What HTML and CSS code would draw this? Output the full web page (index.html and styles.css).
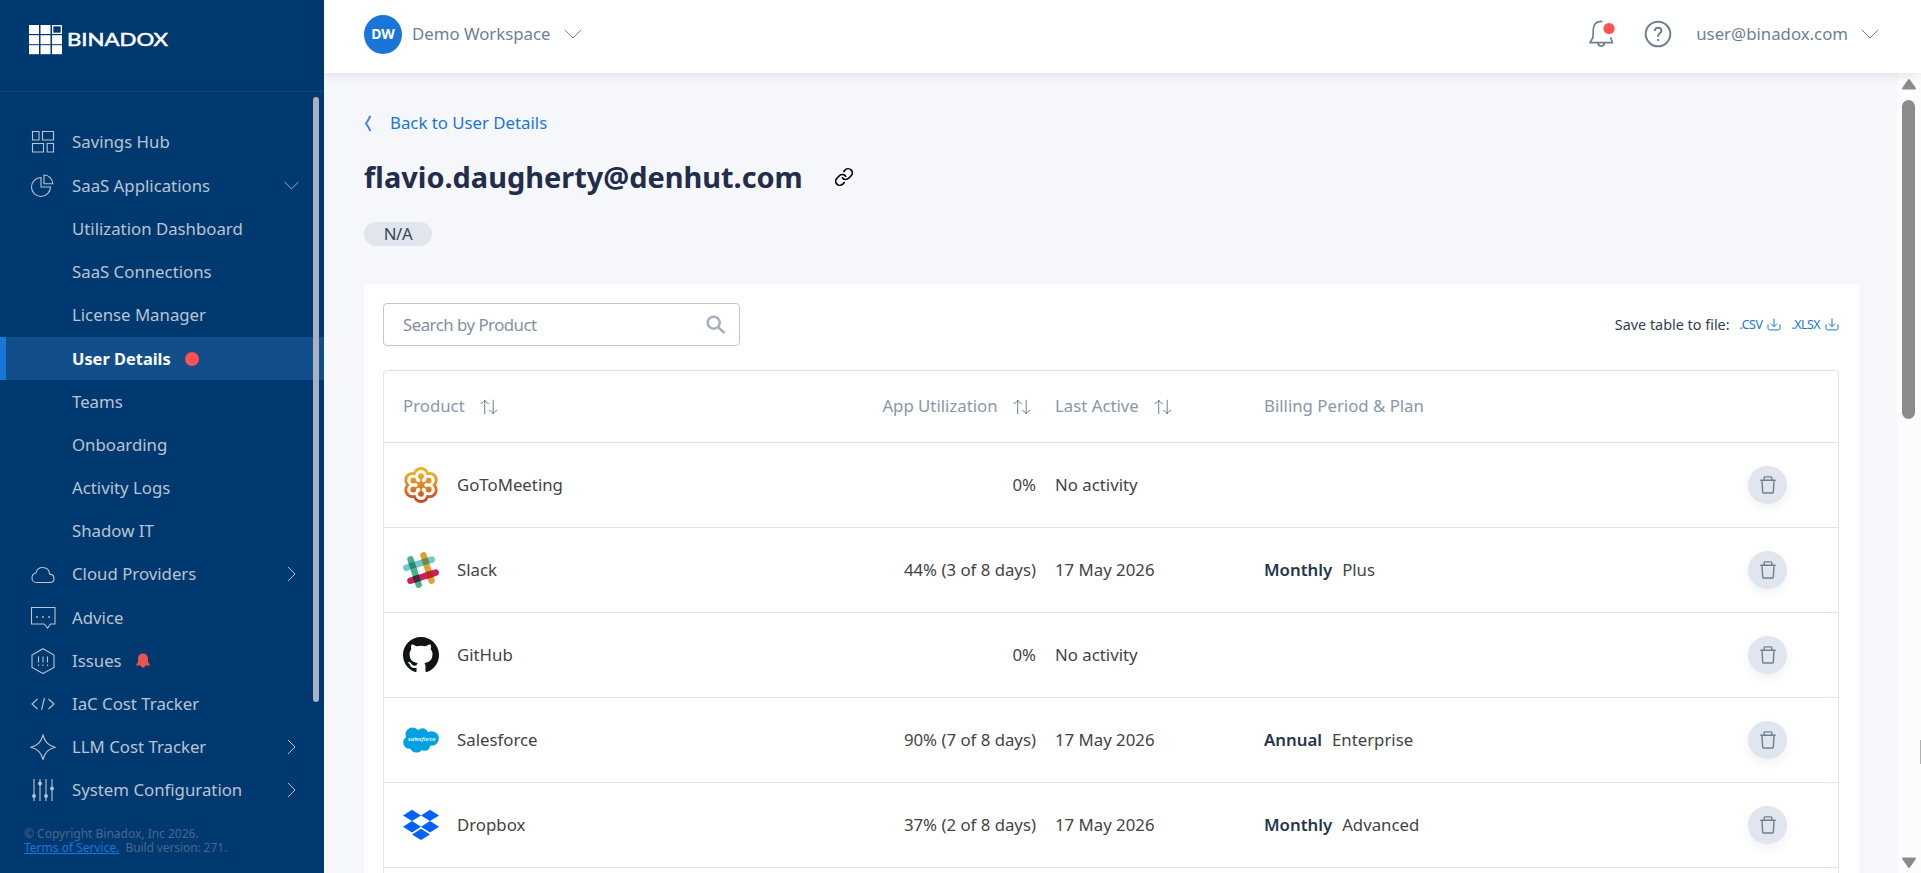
FILE: index.html
```html
<!DOCTYPE html>
<html lang="en">
  <head>
    <meta charset="UTF-8" />
    <meta name="viewport" content="width=device-width, initial-scale=1.0" />
    <title>User Details</title>
    <link rel="stylesheet" href="styles.css">
  </head>
  <body>
    <svg class="sprite" width="0" height="0">
      <symbol id="chevron-down" viewBox="0 0 18 10"><path d="M.7.8 9 9 17.3.8" /></symbol>
      <symbol id="chevron-right" viewBox="0 0 9 16"><path d="M1 1l7 7-7 7" /></symbol>
      <symbol id="sort" viewBox="0 0 18 16">
        <path d="M4.7 15.2V1M.6 4.5C2.700 4 4.200 2.700 4.700 1c.5 1.700 2 3 4.100 3.500M13.200.800V15M9.100 11.500c2.100.5 3.600 1.800 4.100 3.500.5-1.700 2-3 4.100-3.500" />
      </symbol>
      <symbol id="download" viewBox="0 0 14 13">
        <path d="M1 6.500v3.700c0 1 .7 1.700 1.700 1.700h8.600c1 0 1.700-.7 1.700-1.700V6.500M7 .5v8M4 5.700l3 3 3-3" />
      </symbol>
      <symbol id="trash" viewBox="0 0 16 18">
        <path d="M.3 4.200h15.400M2 4.200l.7 12.100c0 .4.300.700.700.700h9.200c.4 0 .7-.3.7-.7L14 4.200M4.200 4V1.700c0-.5.300-.8.800-.8h6c.5 0 .8.300.8.800V4" />
      </symbol>
    </svg>

    <aside class="sidebar">
      <div class="logo">
        <svg width="145" height="30" viewBox="0 0 145 30">
          <g fill="#fff">
            <rect x="0" y="0" width="10" height="9" /><rect x="11.500" y="0" width="10" height="9" />
            <rect x="0" y="10.200" width="10" height="9" /><rect x="11.500" y="10.200" width="10" height="9" /><rect x="23" y="10.200" width="10" height="9" />
            <rect x="0" y="20.200" width="10" height="9" /><rect x="11.500" y="20.200" width="10" height="9" /><rect x="23" y="20.200" width="10" height="9" />
          </g>
          <rect x="23.700" y=".7" width="8.600" height="7.600" fill="none" stroke="#fff" stroke-width="1.300" />
          <text class="logo-text" x="38" y="21" textLength="101" lengthAdjust="spacingAndGlyphs">BINADOX</text>
        </svg>
      </div>

      <nav class="nav">
        <a class="nav-item">
          <svg class="nav-icon" viewBox="0 0 26 26"><path d="M2.500 2.500h6.500v8.500H2.500zM12.500 2.500h11v8.500h-11zM2.500 14.500h11v8.500h-11zM17.200 14.500h6.300v8.500h-6.300z" /></svg>
          Savings Hub
        </a>
        <a class="nav-item">
          <svg class="nav-icon" viewBox="0 0 26 26"><path d="M11 4.500a9.500 9.500 0 1 0 9.500 9.500H11zM14 2v8.700h8.700A8.700 8.700 0 0 0 14 2z" /></svg>
          SaaS Applications
          <svg class="arrow-down" width="15" height="9"><use href="#chevron-down" /></svg>
        </a>
        <a class="nav-item">Utilization Dashboard</a>
        <a class="nav-item">SaaS Connections</a>
        <a class="nav-item">License Manager</a>
        <a class="nav-item active">User Details <span class="dot"></span></a>
        <a class="nav-item">Teams</a>
        <a class="nav-item">Onboarding</a>
        <a class="nav-item">Activity Logs</a>
        <a class="nav-item">Shadow IT</a>
        <a class="nav-item">
          <svg class="nav-icon" viewBox="0 0 26 26"><path d="M6.500 21.500h13.200c2.500 0 4.300-1.800 4.300-4.100 0-2.400-1.800-4.200-4.300-4.300-.5-4-3.200-6.600-7-6.600-3.500 0-6 2.200-6.700 5.500C3.500 12.500 2 14.500 2 17c0 2.500 2 4.500 4.500 4.500z" /></svg>
          Cloud Providers
          <svg class="arrow-right" width="9" height="16"><use href="#chevron-right" /></svg>
        </a>
        <a class="nav-item">
          <svg class="nav-icon" viewBox="0 0 26 26"><path d="M1.500 2.500h23.500v16.500h-4.500l-2.800 4-3.500-4H1.500z" /><path class="dots" d="M7 12h.01M13 12h.01M19 12h.01" /></svg>
          Advice
        </a>
        <a class="nav-item">
          <svg class="nav-icon" viewBox="0 0 26 26"><path d="M13 .7 24 7v12.500L13 25.500 2 19.500V7zM8.500 8.500v6M13 8.500v6M17.500 8.500v6M8.500 16.500V18M13 16.500V18M17.500 16.500V18" /></svg>
          Issues
          <svg class="bell-badge" width="14" height="15" viewBox="0 0 14 15"><path d="M7 .5C3.900.5 2 2.700 2 5.600v3.200L.3 11.400c-.3.500 0 1.100.5 1.100h3.900C5 14 5.900 14.600 7 14.600s2-.6 2.300-2.100h3.900c.5 0 .8-.6.5-1.100L12 8.800V5.600C12 2.700 10.100.5 7 .5z" /></svg>
        </a>
        <a class="nav-item">
          <svg class="nav-icon" viewBox="0 0 26 26"><path d="M7.500 8 2 13l5.500 5M18.500 8l5.500 5-5.500 5M14.500 7l-3 12" /></svg>
          IaC Cost Tracker
        </a>
        <a class="nav-item">
          <svg class="nav-icon" viewBox="0 0 26 26"><path d="M13 1c2 7 4.500 10 12 12.300C17.500 15.500 15 18.500 13 25.500c-2-7-4.500-10-12-12.200C8.500 11 11 8 13 1z" /></svg>
          LLM Cost Tracker
          <svg class="arrow-right" width="9" height="16"><use href="#chevron-right" /></svg>
        </a>
        <a class="nav-item">
          <svg class="nav-icon" viewBox="0 0 26 26"><path d="M4 2v22M10 2v22M16 2v22M22 2v22" /><g class="knobs"><circle cx="4" cy="19" r="1.900" /><circle cx="10" cy="6.500" r="1.900" /><circle cx="16" cy="19" r="1.900" /><circle cx="22" cy="11.500" r="1.900" /></g></svg>
          System Configuration
          <svg class="arrow-right" width="9" height="16"><use href="#chevron-right" /></svg>
        </a>
      </nav>

      <div class="copyright">
        <p>© Copyright Binadox, Inc 2026.</p>
        <p><a class="terms">Terms of Service.</a> <span class="build">Build version: 271.</span></p>
      </div>
      <div class="nav-scroll"></div>
    </aside>

    <div class="main">
      <header class="header">
        <div class="workspace">
          <span class="avatar">DW</span>
          <span class="workspace-name">Demo Workspace</span>
          <svg width="18" height="10"><use href="#chevron-down" /></svg>
        </div>
        <div class="account">
          <svg class="bell" width="26" height="28" viewBox="0 0 26 28">
            <path d="M13.500 1.300h-.8C7.500 1.300 4.400 4.400 4.300 9.200l-.3 8L1.200 22.600h22.100l-1.700-5.400" />
            <path d="M9 22.800c.2 1.900 1.400 3.200 3.200 3.200s3-1.300 3.200-3.200" />
            <circle cx="20" cy="8.500" r="5.600" />
          </svg>
          <svg class="help" width="28" height="28" viewBox="0 0 28 28">
            <circle cx="14" cy="14" r="12.300" />
            <path d="M10.800 11c0-2 1.300-3.300 3.300-3.300s3.300 1.200 3.300 3c0 2.600-3.300 2.700-3.300 5.500v.5M14.100 19v2" />
          </svg>
          <span class="email">user@binadox.com</span>
          <svg width="18" height="10"><use href="#chevron-down" /></svg>
        </div>
      </header>

      <div class="body">
        <main class="content">
          <a class="back">
            <svg width="8" height="17" viewBox="0 0 8 17"><path d="M6.300.8C5 4 3.500 6.500 2 8.500c1.500 2 3 4.300 4.300 7.500" /></svg>
            Back to User Details
          </a>
          <div class="title-row">
            <h1>flavio.daugherty@denhut.com</h1>
            <svg width="20" height="20" viewBox="0 0 24 24"><path d="M10 13a5 5 0 0 0 7.540.54l3-3a5 5 0 0 0-7.070-7.070l-1.720 1.710M14 11a5 5 0 0 0-7.540-.54l-3 3a5 5 0 0 0 7.070 7.070l1.710-1.710" /></svg>
          </div>
          <span class="pill">N/A</span>

          <section class="card">
            <div class="toolbar">
              <div class="search">
                <span>Search by Product</span>
                <svg width="20" height="20" viewBox="0 0 20 20"><circle cx="7.700" cy="7.700" r="6" /><path d="M12 12l6.500 6" /></svg>
              </div>
              <div class="save">
                <span class="save-label">Save table to file:</span>
                <a>.CSV <svg width="14" height="13"><use href="#download" /></svg></a>
                <a>.XLSX <svg width="14" height="13"><use href="#download" /></svg></a>
              </div>
            </div>

            <div class="table-box">
              <table>
                <colgroup>
                  <col class="col-product"><col class="col-util"><col class="col-active"><col class="col-plan"><col class="col-action">
                </colgroup>
                <thead>
                  <tr>
                    <th>Product <svg width="18" height="16"><use href="#sort" /></svg></th>
                    <th class="util">App Utilization <svg width="18" height="16"><use href="#sort" /></svg></th>
                    <th>Last Active <svg width="18" height="16"><use href="#sort" /></svg></th>
                    <th>Billing Period &amp; Plan</th>
                    <th></th>
                  </tr>
                </thead>
                <tbody>
                  <tr>
                    <td>
                      <div class="product">
                        <svg width="36" height="36" viewBox="0 0 36 36">
                          <defs><linearGradient id="goto" gradientUnits="userSpaceOnUse" x1="0" y1="0" x2="0" y2="36"><stop offset=".1" stop-color="#ebb626" /><stop offset=".5" stop-color="#e08525" /><stop offset=".9" stop-color="#cf4a27" /></linearGradient></defs>
                          <g fill="url(#goto)"><circle cx="18" cy="18" r="14" /><circle cx="18" cy="8" r="8" /><circle cx="18" cy="28" r="8" /><circle cx="9.300" cy="13" r="8" /><circle cx="26.700" cy="13" r="8" /><circle cx="9.300" cy="23" r="8" /><circle cx="26.700" cy="23" r="8" /></g>
                          <g fill="#fff"><circle cx="18" cy="18" r="11.500" /><circle cx="18" cy="8.500" r="5.500" /><circle cx="18" cy="27.500" r="5.500" /><circle cx="9.700" cy="13.200" r="5.500" /><circle cx="26.300" cy="13.200" r="5.500" /><circle cx="9.700" cy="22.800" r="5.500" /><circle cx="26.300" cy="22.800" r="5.500" /></g>
                          <path fill="none" stroke="#e08525" stroke-width="1.700" d="M18 9.500v17.500M10.500 13.500l15 9M25.500 13.500l-15 9" />
                          <g fill="url(#goto)"><circle cx="18" cy="18" r="3.400" /><circle cx="18" cy="9.200" r="2.900" /><circle cx="18" cy="26.800" r="2.900" /><circle cx="10.300" cy="13.500" r="2.900" /><circle cx="25.700" cy="13.500" r="2.900" /><circle cx="10.300" cy="22.500" r="2.900" /><circle cx="25.700" cy="22.500" r="2.900" /></g>
                        </svg>
                        GoToMeeting
                      </div>
                    </td>
                    <td class="util">0%</td>
                    <td>No activity</td>
                    <td></td>
                    <td><button class="delete"><svg width="16" height="18"><use href="#trash" /></svg></button></td>
                  </tr>
                  <tr>
                    <td>
                      <div class="product">
                        <svg width="36" height="36" viewBox="0 0 36 36" fill="none" stroke-width="6.400" stroke-linecap="round">
                          <path stroke="#e3a12c" d="M20.500 3.200l8 25.400" />
                          <path stroke="#40b48a" d="M7.500 7.300l8.200 25.400" />
                          <path stroke="#70c7cc" d="M3.300 15.800l25.400-8.200" />
                          <path stroke="#d01c59" d="M7.400 28.800l25.300-8.200" />
                          <g stroke-linecap="butt">
                            <path stroke="#258a75" d="M8.500 10.400l2 6.200" />
                            <path stroke="#6c8a42" d="M21.500 6.400l2 6.200" />
                            <path stroke="#3d2a3c" d="M12.600 23.500l2 6.400" />
                            <path stroke="#bb242a" d="M25.600 19.400l2 6.400" />
                          </g>
                        </svg>
                        Slack
                      </div>
                    </td>
                    <td class="util">44% (3 of 8 days)</td>
                    <td>17 May 2026</td>
                    <td><b>Monthly</b>Plus</td>
                    <td><button class="delete"><svg width="16" height="18"><use href="#trash" /></svg></button></td>
                  </tr>
                  <tr>
                    <td>
                      <div class="product">
                        <svg width="36" height="36" viewBox="0 0 16 16"><path fill="#101514" d="M8 0C3.580 0 0 3.580 0 8c0 3.540 2.290 6.530 5.470 7.590.4.070.55-.17.55-.38 0-.19-.01-.82-.01-1.490-2.010.37-2.530-.49-2.690-.94-.09-.23-.48-.94-.82-1.130-.28-.15-.68-.52-.01-.53.63-.01 1.080.58 1.230.82.72 1.210 1.870.87 2.330.66.07-.52.28-.87.51-1.070-1.780-.2-3.640-.89-3.640-3.950 0-.87.31-1.590.82-2.150-.08-.2-.36-1.020.08-2.120 0 0 .67-.21 2.200.82.64-.18 1.320-.27 2-.27s1.360.09 2 .27c1.530-1.040 2.200-.82 2.200-.82.44 1.100.16 1.920.08 2.120.51.56.82 1.270.82 2.150 0 3.070-1.870 3.750-3.650 3.950.29.25.54.73.54 1.480 0 1.070-.01 1.930-.01 2.200 0 .21.15.46.55.38A8.010 8.010 0 0 0 16 8c0-4.420-3.580-8-8-8z" /></svg>
                        GitHub
                      </div>
                    </td>
                    <td class="util">0%</td>
                    <td>No activity</td>
                    <td></td>
                    <td><button class="delete"><svg width="16" height="18"><use href="#trash" /></svg></button></td>
                  </tr>
                  <tr>
                    <td>
                      <div class="product">
                        <svg width="36" height="36" viewBox="0 0 36 36">
                          <g fill="#00a1e0"><circle cx="9.500" cy="12.500" r="7" /><circle cx="19.500" cy="12" r="5.700" /><circle cx="28.500" cy="16.500" r="7.300" /><circle cx="6.500" cy="20.500" r="6.300" /><circle cx="13.500" cy="24" r="6.600" /><circle cx="21.800" cy="23.500" r="5.200" /><path d="M7 12h22v11H7z" /></g>
                          <text class="sf-text" x="5" y="19" textLength="27.500" lengthAdjust="spacingAndGlyphs">salesforce</text>
                        </svg>
                        Salesforce
                      </div>
                    </td>
                    <td class="util">90% (7 of 8 days)</td>
                    <td>17 May 2026</td>
                    <td><b>Annual</b>Enterprise</td>
                    <td><button class="delete"><svg width="16" height="18"><use href="#trash" /></svg></button></td>
                  </tr>
                  <tr>
                    <td>
                      <div class="product">
                        <svg width="36" height="36" viewBox="0 0 36 36"><path fill="#0061ff" d="M9 2.700l9 5.700-9 5.700-9-5.700zM27 2.700l9 5.700-9 5.700-9-5.700zM9 14.100l9 5.700-9 5.700-9-5.700zM27 14.100l9 5.700-9 5.700-9-5.700zM18 21.700l9 5.700-9 5.700-9-5.700z" /></svg>
                        Dropbox
                      </div>
                    </td>
                    <td class="util">37% (2 of 8 days)</td>
                    <td>17 May 2026</td>
                    <td><b>Monthly</b>Advanced</td>
                    <td><button class="delete"><svg width="16" height="18"><use href="#trash" /></svg></button></td>
                  </tr>
                </tbody>
              </table>
            </div>
          </section>
        </main>

        <div class="scrollbar">
          <svg width="16" height="12" viewBox="0 0 16 12"><path d="M8 2l6 8.500H2z" /></svg>
          <div class="thumb"></div>
          <svg class="scroll-down" width="16" height="12" viewBox="0 0 16 12"><path d="M8 10L2 1.500h12z" /></svg>
        </div>
      </div>
    </div>
    <div class="side-tab"></div>
  </body>
</html>
```
FILE: styles.css
```css
* {
  margin: 0;
  padding: 0;
  box-sizing: border-box;
}

body {
  display: flex;
  height: 100vh;
  overflow: hidden;
  font-family: "Noto Sans", sans-serif;
  font-size: 16.8px;
  line-height: 24px;
  color: #444;
  background: #f5f7fb;
}

.sprite {
  position: absolute;
}

svg {
  flex-shrink: 0;
}

/* sidebar */
.sidebar {
  position: relative;
  display: flex;
  flex-direction: column;
  flex-shrink: 0;
  width: 324px;
  background: #00396f;
}

.logo {
  height: 92px;
  padding: 25px 0 0 29px;
  border-bottom: 1px solid #114880;
}

.logo-text {
  font-family: Lato, sans-serif;
  font-size: 18px;
  font-weight: 400;
  fill: #fff;
  stroke: #fff;
  stroke-width: 0.5;
}

.nav {
  padding-top: 29px;
}

.nav-item {
  display: flex;
  align-items: center;
  height: 43.2px;
  padding: 0 24px 0 72px;
  color: #b9c4d3;
}

.nav-item:first-child {
  padding-bottom: 2px;
}

.nav-icon {
  width: 26px;
  height: 26px;
  margin: 0 16px 0 -42px;
  fill: none;
  stroke: #b9c4d3;
  stroke-width: 1.100;
}

.nav-icon .dots {
  stroke-width: 1.800;
  stroke-linecap: round;
}

.nav-icon .knobs {
  fill: #b9c4d3;
  stroke: none;
}

.nav-item.active {
  padding-left: 66px;
  border-left: 6px solid #1976d8;
  background: #114e8a;
  color: #fff;
  font-size: 16.4px;
  font-weight: 700;
}

.dot {
  width: 14px;
  height: 14px;
  margin: 1px 0 0 14px;
  border-radius: 50%;
  background: #ff5252;
}

.bell-badge {
  margin-left: 14px;
  fill: #e8554e;
}

.arrow-down,
.arrow-right {
  margin-left: auto;
  fill: none;
  stroke: #b9c4d3;
}

.arrow-down {
  margin-right: 1px;
}

.arrow-right {
  margin-right: 4px;
}

.copyright {
  padding: 15px 0 0 24px;
  font-size: 12px;
  line-height: 14px;
  color: #4d6590;
}

.terms {
  color: #1976d8;
  text-decoration: underline;
}

.build {
  margin-left: 3px;
  letter-spacing: -0.1px;
}

.nav-scroll {
  position: absolute;
  top: 97px;
  right: 5px;
  width: 6px;
  height: 605px;
  border-radius: 3px;
  background: #a9b1c0;
}

/* header */
.main {
  display: flex;
  flex-direction: column;
  flex: 1;
  min-width: 0;
}

.header {
  position: relative;
  display: flex;
  align-items: center;
  justify-content: space-between;
  flex-shrink: 0;
  height: 73px;
  padding: 0 42px 5px 40px;
  background: #fff;
  box-shadow: 0 2px 10px rgba(40, 50, 80, 0.12);
  color: #708090;
}

.workspace,
.account {
  display: flex;
  align-items: center;
}

.header svg {
  fill: none;
  stroke: #708090;
}

.avatar {
  width: 38px;
  height: 39px;
  margin-right: 10px;
  border-radius: 50%;
  background: #1976d8;
  color: #fff;
  font-size: 14px;
  font-weight: 700;
  line-height: 38px;
  text-align: center;
}

.workspace-name,
.email {
  margin-right: 13px;
}

.header .bell {
  margin-right: 29px;
  stroke-width: 1.700;
}

.bell circle {
  fill: #ff5252;
  stroke: none;
}

.header .help {
  margin-right: 24px;
  stroke-width: 2;
}

/* page body */
.body {
  display: flex;
  flex: 1;
  min-height: 0;
}

.content {
  flex: 1;
  padding: 38px 38px 0 40px;
  overflow: hidden;
}

.back {
  display: flex;
  align-items: center;
  gap: 18px;
  color: #1976d8;
}

.back svg {
  fill: none;
  stroke: #4285f4;
  stroke-width: 2;
}

.title-row {
  display: flex;
  align-items: center;
  gap: 31px;
  margin-top: 21px;
}

h1 {
  font-size: 28.9px;
  line-height: 42px;
  color: #222d4b;
}

.title-row svg {
  fill: none;
  stroke: #000;
  stroke-width: 2;
  stroke-linecap: round;
}

.pill {
  display: block;
  width: 68px;
  height: 24px;
  margin-top: 24px;
  border-radius: 12px;
  background: #e0e5ee;
  color: #36474f;
  letter-spacing: -0.4px;
  text-align: center;
}

.card {
  height: 700px;
  margin-top: 38px;
  padding: 19px 20px 0 19px;
  border-radius: 4px;
  background: #fff;
}

.toolbar {
  display: flex;
  align-items: center;
  justify-content: space-between;
}

.search {
  display: flex;
  align-items: center;
  justify-content: space-between;
  width: 357px;
  height: 43px;
  padding: 0 13px 0 19px;
  border: 1px solid #c1c5d3;
  border-radius: 4px;
  letter-spacing: -0.5px;
  color: #8490a0;
}

.search svg {
  fill: none;
  stroke: #a5b0c0;
  stroke-width: 2.500;
}

.save {
  display: flex;
  align-items: center;
  gap: 10px;
  font-size: 14.4px;
  color: #2f3e50;
}

.save a {
  display: flex;
  align-items: center;
  gap: 5px;
  font-size: 12.4px;
  letter-spacing: -0.5px;
  color: #1976d8;
}

.save svg {
  fill: none;
  stroke: #1976d8;
}

.table-box {
  height: 600px;
  margin-top: 24px;
  border: 1px solid #e0e4ee;
  border-radius: 4px;
}

table {
  width: 100%;
  table-layout: fixed;
  border-collapse: collapse;
}

.col-product {
  width: 478px;
}

.col-util {
  width: 183px;
}

.col-active {
  width: 209px;
}

.col-plan {
  width: 440px;
}

tr {
  border-bottom: 1px solid #e0e4ec;
}

th,
td {
  height: 85px;
  padding: 0 10px;
  text-align: left;
  white-space: nowrap;
}

th {
  height: 71px;
  font-weight: 400;
  color: #8a97a8;
}

th svg {
  margin-left: 11px;
  vertical-align: -3px;
  fill: none;
  stroke: #708090;
}

th:first-child,
td:first-child {
  padding-left: 19px;
}

.util {
  padding-right: 9px;
  text-align: right;
}

th.util {
  padding-right: 14px;
}

.product {
  display: flex;
  align-items: center;
  gap: 18px;
}

.sf-text {
  font-family: "Open Sans", sans-serif;
  font-size: 6px;
  font-style: italic;
  font-weight: 600;
  fill: #fff;
}

td b {
  margin-right: 10px;
  font-weight: 600;
  color: #26364a;
}

.delete {
  display: flex;
  align-items: center;
  justify-content: center;
  width: 39px;
  height: 38px;
  margin-left: 44px;
  border: none;
  border-radius: 50%;
  background: #e0e5ee;
  box-shadow: 0 4px 10px rgba(40, 50, 80, 0.07);
}

.delete svg {
  fill: none;
  stroke: #708090;
  stroke-width: 1.400;
}

/* scrollbar */
.scrollbar {
  display: flex;
  flex-direction: column;
  align-items: center;
  width: 24px;
  padding: 5px 1px 4px 0;
  background: #fcfcfc;
}

.scrollbar svg {
  fill: #8b8b8b;
  stroke: #8b8b8b;
  stroke-width: 2;
  stroke-linejoin: round;
}

.thumb {
  width: 13px;
  height: 319px;
  margin-top: 10px;
  border-radius: 7px;
  background: #8b8b8b;
}

.scroll-down {
  margin-top: auto;
}

/* sliver of the widget docked on the right edge */
.side-tab {
  position: absolute;
  top: 740px;
  right: 0;
  width: 1px;
  height: 24px;
  background: #b0b0b0;
}
```
